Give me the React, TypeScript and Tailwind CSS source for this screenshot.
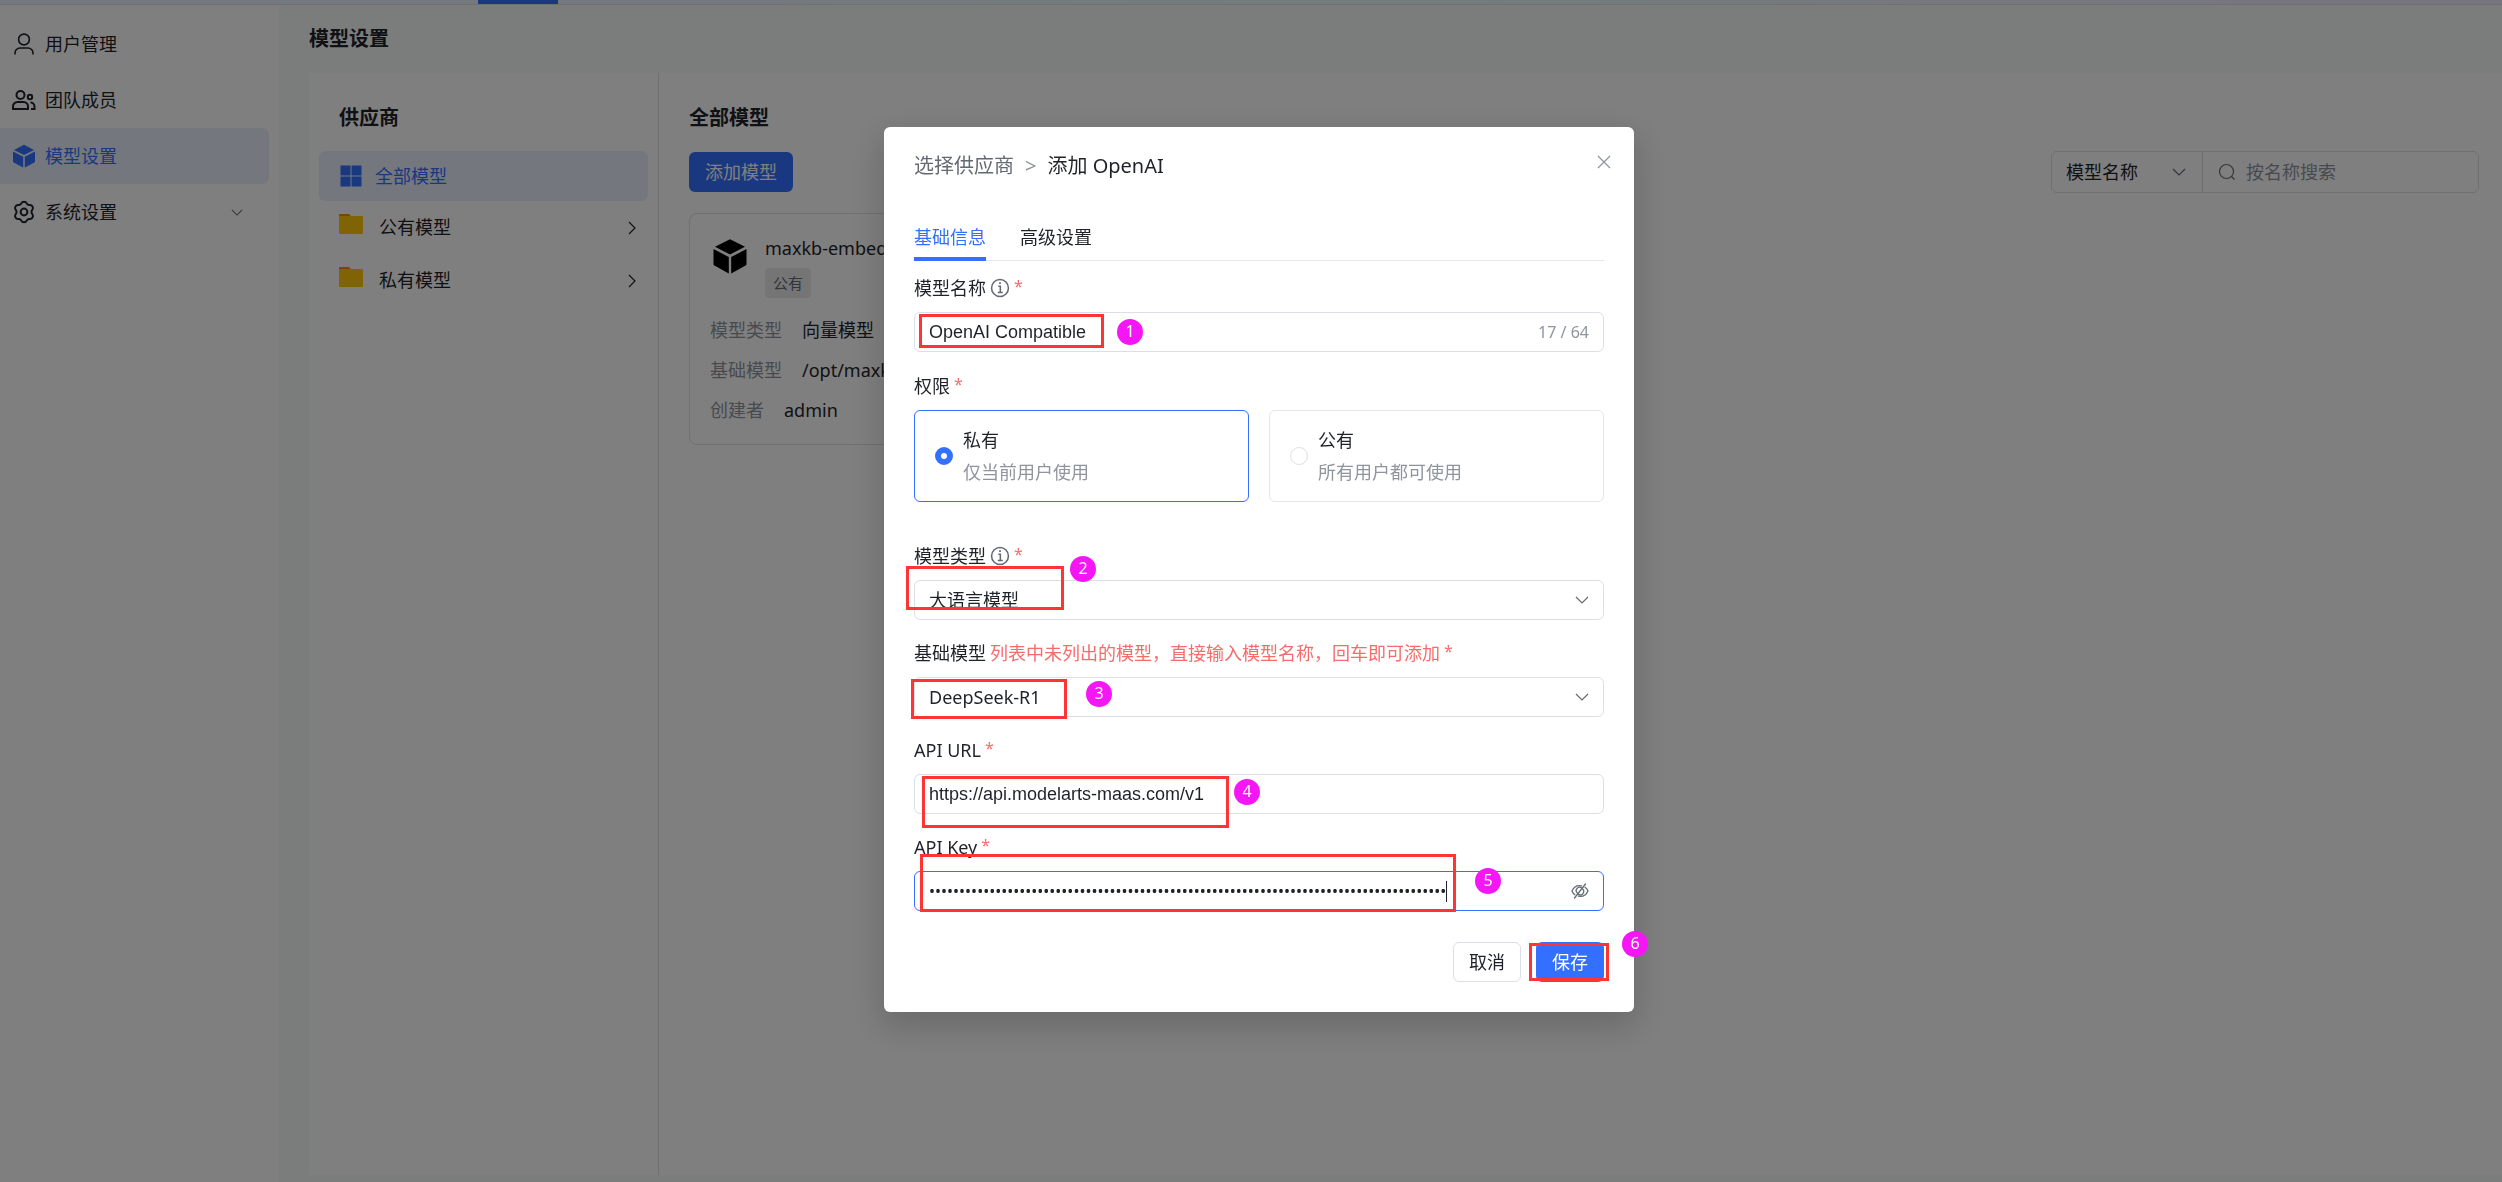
import type { ReactNode } from "react";

const CubeIcon = ({ className }: { className: string }) => (
 <svg viewBox="0 0 24 24" fill="currentColor" className={className}>
  <path d="M12 0.8 22 5.9 12 11 2 5.9Z" />
  <path d="M1 7.4 11.2 12.7V23.6L1.6 18.4Q1 18 1 17.3Z" />
  <path d="M23 7.4 12.8 12.7V23.6L22.4 18.4Q23 18 23 17.3Z" />
 </svg>
);

const UserIcon = () => (
 <svg viewBox="0 0 24 24" fill="none" stroke="currentColor" strokeWidth="1.6" className="size-6">
  <circle cx="12" cy="7.5" r="5.4" />
  <path d="M3 22.5V21a5 5 0 0 1 5-5h8a5 5 0 0 1 5 5v1.5" />
 </svg>
);

const TeamIcon = () => (
 <svg viewBox="0 0 24 24" fill="none" stroke="currentColor" strokeWidth="2" className="size-6">
  <circle cx="8.5" cy="7" r="4" />
  <path d="M1 21v-2.500a4.500 4.500 0 0 1 4.500-4.500h6a4.500 4.500 0 0 1 4.500 4.500V21Z" />
  <circle cx="18" cy="9" r="2.200" />
  <path d="M18.500 14.500a4 4 0 0 1 4 4V21H19" />
 </svg>
);

const GearIcon = () => (
 <svg viewBox="0 0 24 24" fill="none" stroke="currentColor" strokeWidth="2" strokeLinejoin="round" className="size-6">
  <path d="M9.300 3.400a3 3 0 0 1 5.400 0 3 3 0 0 0 3 1.700 3 3 0 0 1 2.700 4.700 3 3 0 0 0 0 4.400 3 3 0 0 1-2.700 4.700 3 3 0 0 0-3 1.700 3 3 0 0 1-5.400 0 3 3 0 0 0-3-1.700 3 3 0 0 1-2.700-4.700 3 3 0 0 0 0-4.400 3 3 0 0 1 2.700-4.700 3 3 0 0 0 3-1.700Z" />
  <circle cx="12" cy="12" r="3.400" />
 </svg>
);

const FolderIcon = () => (
 <svg viewBox="0 0 24 20" className="h-5 w-6">
  <path d="M0 1a1 1 0 0 1 1-1h9l2 2v4H0Z" fill="#ff8800" />
  <rect y="2" width="24" height="18" rx="1" fill="#ffc60a" />
 </svg>
);

const InfoIcon = () => (
 <svg viewBox="0 0 18 18" fill="none" stroke="currentColor" strokeWidth="1.4" className="size-5 text-[#646a73]">
  <circle cx="9" cy="9" r="7.600" />
  <path d="M7.500 7.500H9.300V13M7 13h4.500" />
  <path d="M8.200 4.700h1.600" strokeWidth="1.600" />
 </svg>
);

const EyeOffIcon = () => (
 <svg viewBox="0 0 18 18" fill="none" stroke="currentColor" strokeWidth="1.300" strokeLinecap="round" className="size-[18px]">
  <path d="M10.500 3.800C6 3 2.500 5.500 1 9c.6 1.500 1.600 2.800 2.900 3.700M7.500 14.200C12 15 15.500 12.500 17 9c-.6-1.500-1.600-2.800-2.900-3.700" />
  <path d="M11 6.300a3.300 3.300 0 0 0-4.800 4.600M7 11.700a3.300 3.300 0 0 0 4.900-4.500" />
  <path d="M14.500 2 3.500 16" />
 </svg>
);

const ChevronDown = ({ className }: { className: string }) => (
 <svg viewBox="0 0 14 8" fill="none" stroke="currentColor" strokeWidth="1.200" className={className}>
  <path d="m1 1 6 6 6-6" />
 </svg>
);

const ChevronRight = ({ className }: { className: string }) => (
 <svg viewBox="0 0 8 14" fill="none" stroke="currentColor" strokeWidth="1.200" className={className}>
  <path d="m1 1 6 6-6 6" />
 </svg>
);

const CloseIcon = () => (
 <svg viewBox="0 0 14 14" fill="none" stroke="currentColor" strokeWidth="1.300" className="size-3.5">
  <path d="m1 1 12 12M13 1 1 13" />
 </svg>
);

const SearchIcon = () => (
 <svg viewBox="0 0 18 18" fill="none" stroke="currentColor" strokeWidth="1.200" className="size-[18px] shrink-0 text-[#646a73]">
  <circle cx="8.500" cy="8.500" r="7" />
  <path d="m13.500 13.500 3 3" />
 </svg>
);

const menu = [
 { name: "用户管理", icon: <UserIcon /> },
 { name: "团队成员", icon: <TeamIcon /> },
 { name: "模型设置", icon: <CubeIcon className="size-6" />, active: true },
 { name: "系统设置", icon: <GearIcon />, more: true },
];

const modelInfo = [
 { label: "模型类型", value: "向量模型" },
 { label: "基础模型", value: "/opt/maxkb" },
 { label: "创建者", value: "admin" },
];

const permissions = [
 { value: "private", name: "私有", description: "仅当前用户使用" },
 { value: "public", name: "公有", description: "所有用户都可使用" },
];

const Mark = ({ box, badge, step }: { box: string; badge: string; step: number }) => (
 <>
  <span className={`pointer-events-none absolute border-[3px] border-[#ff3535] ${box}`} />
  <span
   className={`pointer-events-none absolute flex size-[26px] justify-center rounded-full bg-[#f516f5] text-base leading-6 text-white ${badge}`}
  >
   {step}
  </span>
 </>
);

const Required = () => <span className="ml-1 self-start text-base leading-6 text-[#f56c6c]">*</span>;

type FieldProps = {
 id: string;
 label: string;
 info?: boolean;
 hint?: string;
 children: ReactNode;
};

const Field = ({ id, label, info, hint, children }: FieldProps) => (
 <div>
  <label htmlFor={id} className="flex h-7 items-center">
   {label}
   {info && <span className="ml-1"><InfoIcon /></span>}
   {hint && <span className="ml-1 text-[#f56c6c]">{hint}</span>}
   <Required />
  </label>
  <div className="relative mt-2.5">{children}</div>
 </div>
);

const controlClass = "h-10 w-full rounded-md border border-[#dcdfe6] bg-white px-3.5 text-[#1f2329] outline-none";

const Sidebar = () => (
 <nav className="w-[279px] shrink-0 bg-white pt-[11px]">
  {menu.map((item) => (
   <a
    href="#"
    key={item.name}
    className={`mr-2.5 flex h-14 items-center rounded-r-md pl-3 ${item.active ? "bg-[#e9f1fd] text-[#3370ff]" : ""}`}
   >
    {item.icon}
    <span className="ml-[9px]">{item.name}</span>
    {item.more && <ChevronDown className="mr-[26px] ml-auto h-[7px] w-3 text-[#646a73]" />}
   </a>
  ))}
 </nav>
);

const Providers = () => (
 <div className="w-[350px] shrink-0 border-r border-[#dee0e3] px-2.5 pt-[31px]">
  <h4 className="pl-5 text-xl leading-7 font-bold">供应商</h4>
  <button className="mt-[19px] flex h-[50px] w-full items-center rounded-md bg-[#e9f1fd] pl-5 text-[#3370ff]">
   <svg viewBox="0 0 24 24" fill="currentColor" className="size-6">
    <path d="M1.500 1.500h10v10h-10zM12.500 1.500h10v10h-10zM1.500 12.500h10v10h-10zM12.500 12.500h10v10h-10z" />
   </svg>
   <span className="ml-3">全部模型</span>
  </button>
  {["公有模型", "私有模型"].map((name) => (
   <button key={name} className="flex h-[53px] w-full items-center pr-3 pl-5">
    <span className="mb-2"><FolderIcon /></span>
    <span className="ml-4">{name}</span>
    <ChevronRight className="ml-auto h-3.5 w-2" />
   </button>
  ))}
 </div>
);

const ModelList = () => (
 <main className="min-w-0 grow pt-[31px] pr-[23px] pl-[30px]">
  <h4 className="text-xl leading-7 font-bold">全部模型</h4>
  <div className="mt-[19px] flex items-center justify-between">
   <button className="h-10 rounded-md bg-[#3370ff] px-4 text-white">添加模型</button>
   <div className="flex h-[42px] rounded-md border border-[#dcdfe6]">
    <div className="relative flex w-[151px] items-center border-r border-[#dcdfe6]">
     <select aria-label="搜索字段" className="w-full appearance-none pl-3.5 outline-none">
      <option>模型名称</option>
     </select>
     <ChevronDown className="pointer-events-none absolute right-4 h-2 w-3.5 text-[#646a73]" />
    </div>
    <div className="flex w-[275px] items-center pl-[15px]">
     <SearchIcon />
     <input aria-label="按名称搜索" placeholder="按名称搜索" className="ml-2.5 w-full outline-none placeholder:text-[#8f959e]" />
    </div>
   </div>
  </div>
  <article className="mt-5 w-[440px] rounded-lg border border-[#dee0e3] px-5 pt-5 pb-3.5">
   <div className="flex">
    <span className="mt-1 flex w-10 justify-center text-black"><CubeIcon className="size-9" /></span>
    <div className="ml-[15px]">
     <h5 className="leading-7">maxkb-embedding</h5>
     <span className="mt-1.5 block w-fit rounded-sm bg-[#eaebec] px-2 text-[15px] leading-[30px] text-[#646a73]">公有</span>
    </div>
   </div>
   <dl className="mt-3">
    {modelInfo.map((row) => (
     <div key={row.label} className="flex h-10 items-center gap-5 whitespace-nowrap">
      <dt className="text-[#8f959e]">{row.label}</dt>
      <dd>{row.value}</dd>
     </div>
    ))}
   </dl>
  </article>
 </main>
);

const ModelDialog = () => (
 <div
  role="dialog"
  aria-modal="true"
  aria-label="添加 OpenAI"
  className="relative mt-[127px] h-fit w-[750px] rounded-md bg-white px-[30px] pt-5 pb-[30px] shadow-[0_12px_32px_4px_rgba(0,0,0,0.16)]"
 >
  <header className="flex h-[38px] items-center text-xl">
   <a href="#" className="text-[#646a73]">选择供应商</a>
   <span className="mx-[11px] text-[#8f959e]">&gt;</span>
   <span>添加 OpenAI</span>
   <button type="button" aria-label="关闭" className="-mr-[7px] mb-2 ml-auto text-[#8f959e]"><CloseIcon /></button>
  </header>
  <div role="tablist" className="mt-[26px] flex h-[50px] gap-[34px] border-b border-[#e4e7ed]">
   <button role="tab" aria-selected="true" className="-mb-px border-b-4 border-[#3370ff] pt-1.5 text-[#3370ff]">基础信息</button>
   <button role="tab" aria-selected="false" className="-mb-px border-b-4 border-transparent pt-1.5">高级设置</button>
  </div>
  <form className="mt-[13px]">
   <Field id="name" label="模型名称" info>
    <input id="name" defaultValue="OpenAI Compatible" className={`${controlClass} font-['Liberation_Sans']`} />
    <span className="absolute top-2 right-[15px] text-base text-[#8f959e]">17 / 64</span>
   </Field>
   <fieldset className="mt-5">
    <legend className="flex h-7 items-center">
     权限
     <Required />
    </legend>
    <div className="mt-2.5 grid grid-cols-2 gap-5">
     {permissions.map((item, i) => (
      <label
       key={item.value}
       className={`flex h-[92px] items-center gap-2.5 rounded-md border px-5 ${i === 0 ? "border-[#3370ff]" : "border-[#e4e7ed]"}`}
      >
       <input
        type="radio"
        name="permission"
        defaultChecked={i === 0}
        className="size-[18px] appearance-none rounded-full border border-[#dcdfe6] checked:border-[6px] checked:border-[#3370ff]"
       />
       <span>
        <span className="block leading-8">{item.name}</span>
        <span className="block leading-8 text-[#8f959e]">{item.description}</span>
       </span>
      </label>
     ))}
    </div>
   </fieldset>
   <div className="mt-10 flex flex-col gap-[19px]">
    <Field id="type" label="模型类型" info>
     <select id="type" className={`${controlClass} appearance-none`}>
      <option>大语言模型</option>
     </select>
     <ChevronDown className="pointer-events-none absolute top-4 right-[15px] h-2 w-3.5 text-[#646a73]" />
    </Field>
    <Field id="base" label="基础模型" hint="列表中未列出的模型，直接输入模型名称，回车即可添加">
     <select id="base" className={`${controlClass} appearance-none`}>
      <option>DeepSeek-R1</option>
     </select>
     <ChevronDown className="pointer-events-none absolute top-4 right-[15px] h-2 w-3.5 text-[#646a73]" />
    </Field>
    <Field id="url" label="API URL">
     <input id="url" defaultValue="https://api.modelarts-maas.com/v1" className={`${controlClass} font-['Liberation_Sans']`} />
    </Field>
    <Field id="key" label="API Key">
     <div className="flex h-10 items-center rounded-md border border-[#3370ff] px-3.5">
      <input id="key" type="password" defaultValue={"x".repeat(86)} className="field-sizing-content text-base outline-none" />
      <span className="h-[21px] w-px bg-[#1f2329]" />
      <button type="button" aria-label="显示密钥" className="ml-auto text-[#646a73]"><EyeOffIcon /></button>
     </div>
    </Field>
   </div>
   <footer className="mt-[31px] flex justify-end gap-[15px]">
    <button type="button" className="h-10 w-[68px] rounded-md border border-[#dcdfe6]">取消</button>
    <button type="button" className="h-10 w-[68px] rounded-md bg-[#3370ff] text-white">保存</button>
   </footer>
  </form>
  <Mark step={1} box="left-[35px] top-[187px] h-[34px] w-[185px]" badge="left-[233px] top-[192px]" />
  <Mark step={2} box="left-[22px] top-[439px] h-[44px] w-[158px]" badge="left-[186px] top-[429px]" />
  <Mark step={3} box="left-[27px] top-[552px] h-[40px] w-[156px]" badge="left-[202px] top-[554px]" />
  <Mark step={4} box="left-[38px] top-[649px] h-[52px] w-[307px]" badge="left-[350px] top-[652px]" />
  <Mark step={5} box="left-[36px] top-[727px] h-[58px] w-[536px]" badge="left-[591px] top-[741px]" />
  <Mark step={6} box="left-[645px] top-[816px] h-[38px] w-[80px]" badge="left-[738px] top-[804px]" />
 </div>
);

const App = () => {
 return (
  <div className="flex min-h-screen flex-col bg-[#f5faf7] font-['Noto_Sans','Noto_Sans_CJK_SC',sans-serif] text-[18px] text-[#1f2329]">
   <div className="flex h-[5px] border-b border-[#dee0e3] bg-linear-to-r from-[#ebf1ff] from-25% via-[#e5fbf8] via-55% to-[#f2ebfe] to-90%">
    <span className="ml-[478px] h-1 w-20 bg-[#3370ff]" />
   </div>
   <div className="flex grow">
    <Sidebar />
    <div className="flex min-w-0 grow flex-col pb-[7px] pl-[30px]">
     <h3 className="flex h-[68px] items-center text-xl font-bold">模型设置</h3>
     <div className="flex grow bg-white">
      <Providers />
      <ModelList />
     </div>
    </div>
   </div>
   <div className="fixed inset-0 flex justify-center overflow-auto bg-black/50 pl-4">
    <ModelDialog />
   </div>
  </div>
 );
};

export default App;
